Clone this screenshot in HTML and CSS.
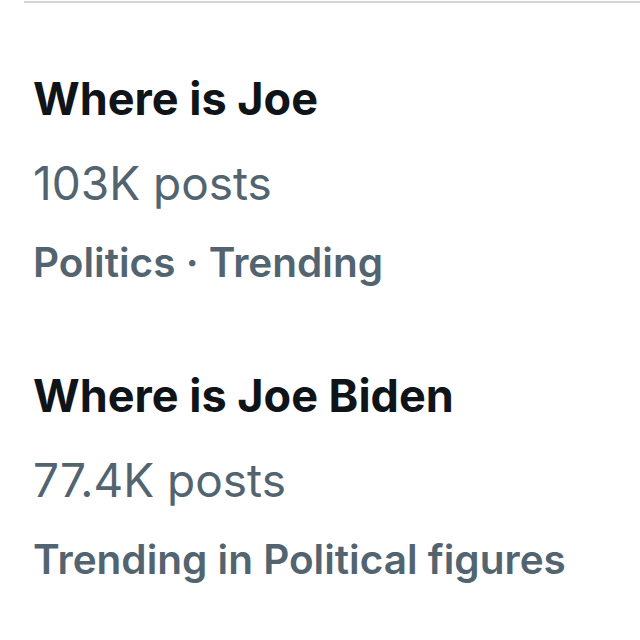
FILE: index.html
```html
<!DOCTYPE html>
<html>
<head>
<meta charset="utf-8">
<link rel="stylesheet" href="styles.css">
</head>
<body>
<div class="topline"></div>
<div class="list">
  <div class="trend">
    <div class="title">Where is Joe</div>
    <div class="count">103K posts</div>
    <div class="meta">Politics · Trending</div>
  </div>
  <div class="trend">
    <div class="title">Where is Joe Biden</div>
    <div class="count">77.4K posts</div>
    <div class="meta">Trending in Political figures</div>
  </div>
</div>
</body>
</html>
```
FILE: styles.css
```css
html, body {
  margin: 0;
  padding: 0;
  background: #ffffff;
  width: 640px;
  height: 640px;
  overflow: hidden;
}
body {
  font-family: Inter, "Open Sans", sans-serif;
}
.topline {
  margin-left: 24px;
  height: 2px;
  margin-top: 1px;
  background: #d4d4d4;
}
.list {
  padding-left: 33px;
  padding-top: 70px;
  display: flex;
  flex-direction: column;
  gap: 84px;
}
.trend {
  display: flex;
  flex-direction: column;
}
.title {
  font-size: 45px;
  font-weight: 700;
  color: #0f1419;
  line-height: 52px;
}
.count {
  font-size: 46px;
  font-weight: 400;
  color: #536471;
  line-height: 52px;
  margin-top: 32px;
}
.meta {
  font-size: 40.5px;
  font-weight: 600;
  color: #536471;
  line-height: 46px;
  margin-top: 31px;
}
```
